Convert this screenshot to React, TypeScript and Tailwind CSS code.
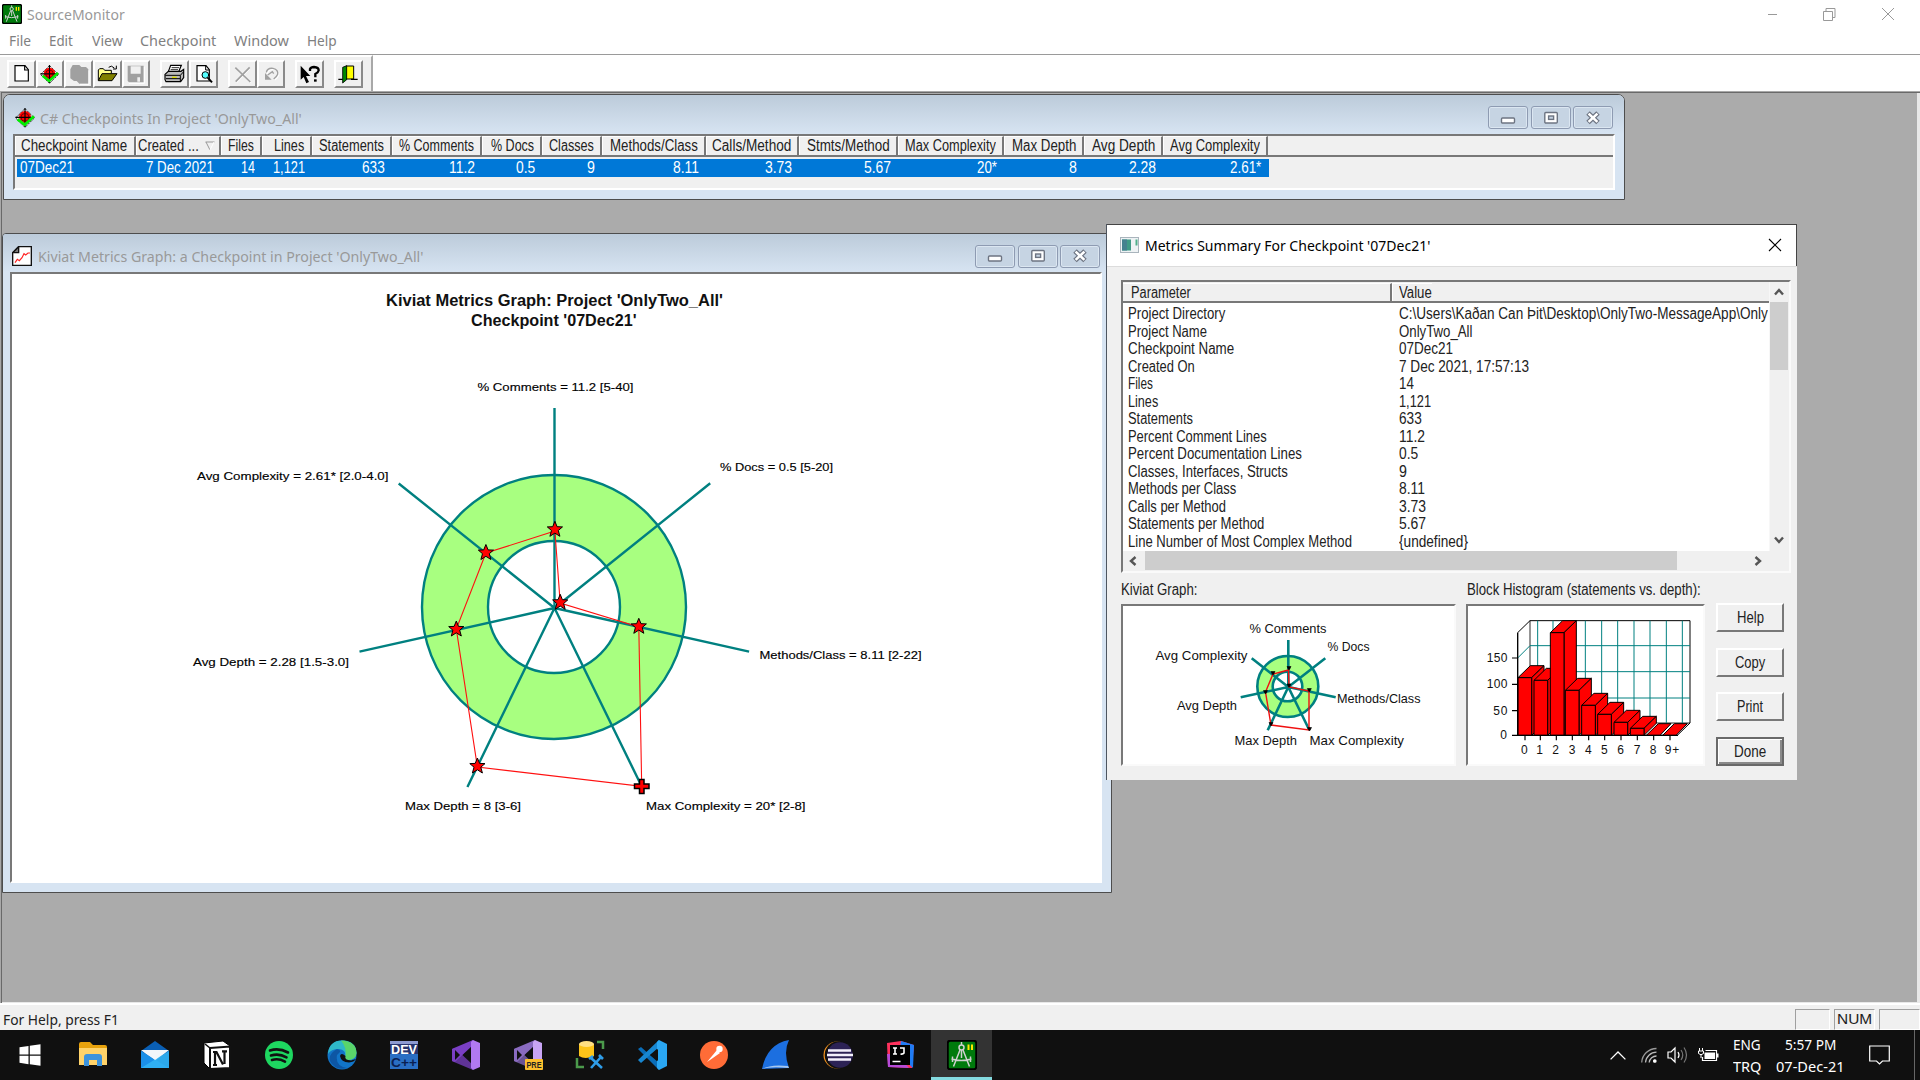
import React, { useLayoutEffect, useRef, useState } from "react";

const sans = "font-['Liberation_Sans',Arial,sans-serif]";

/* Single line of text condensed or stretched horizontally to the given width. */
function T({ w, className = "", children }: { w: number; className?: string; children: string }) {
  const ref = useRef<HTMLSpanElement>(null);
  const [scale, setScale] = useState(1);
  useLayoutEffect(() => {
    if (ref.current) setScale(w / ref.current.offsetWidth);
  }, [w, children]);
  return (
    <span className={"inline-block shrink-0 whitespace-pre text-left " + className} style={{ width: w }}>
      <span ref={ref} className="inline-block origin-left" style={{ transform: `scaleX(${scale})` }}>
        {children}
      </span>
    </span>
  );
}

function Compass({ className }: { className: string }) {
  return (
    <svg viewBox="0 0 60 60" className={className}>
      <rect x="1.5" y="1.5" width="57" height="57" rx="5" fill="#007a0c" stroke="#000" strokeWidth="4" />
      <path d="M43 9v11M50 9v11" stroke="#ffe800" strokeWidth="4" />
      <path d="M26 20L13 53M32 20L45 53M9 38q20 6 40 0M11 33v11M47 33v11" stroke="#d0d0d0" strokeWidth="3" fill="none" />
      <circle cx="29" cy="15" r="5" fill="none" stroke="#d0d0d0" strokeWidth="3" />
      <path d="M29 4v6M29 20v16" stroke="#d0d0d0" strokeWidth="3" />
    </svg>
  );
}

function Target({ className }: { className: string }) {
  return (
    <svg viewBox="0 0 60 60" className={className}>
      <path d="M30 2L58 30L30 58L2 30Z" fill="#eee" stroke="#222" strokeWidth="3" strokeDasharray="7 3" />
      <circle cx="30" cy="27" r="18" fill="#f00" />
      <path d="M30 0v58M1 28h57" stroke="#000" strokeWidth="3.5" />
      <circle cx="30" cy="28" r="12" fill="none" stroke="#300" strokeWidth="2" />
      <path d="M8 34L29 50L57 25" fill="none" stroke="#0e0" strokeWidth="8" />
    </svg>
  );
}

function ToolButton({ children, className = "" }: { children: React.ReactNode; className?: string }) {
  return (
    <div className={"flex h-[28px] w-[28.7px] items-center justify-center border-2 border-t-white border-l-white border-r-[#8a8a8a] border-b-[#8a8a8a] bg-[#f0f0f0] " + className}>
      {children}
    </div>
  );
}

function Toolbar() {
  const c = "h-[24px] w-[24px] shrink-0";
  return (
    <div className="flex h-[37px] items-start border-t border-[#9a9a9a] bg-white">
      <div className="flex h-[36px] w-[373px] items-start border-t-2 border-r-2 border-t-white border-r-[#a8a8a8] bg-[#f0f0f0] pt-[3px] pl-[7px]">
        <ToolButton>
          <svg viewBox="28 183 72 72" className={c}>
            <path d="M46 194H76L86 206V240H46Z" fill="#fff" stroke="#000" strokeWidth="3.5" />
            <path d="M75 194V207H86" fill="none" stroke="#000" strokeWidth="3.5" />
          </svg>
        </ToolButton>
        <ToolButton><Target className="mr-[2px] h-[19px] w-[19px]" /></ToolButton>
        <ToolButton>
          <svg viewBox="201 183 72 72" className={c}>
            <path d="M218 192h20l6 6h14l7 7v43h-27l-8-8h-8l-11-8v-27z" fill="#a0a0a0" />
            <path d="M267 208v42h-27" fill="none" stroke="#fff" strokeWidth="3" />
          </svg>
        </ToolButton>
        <ToolButton>
          <svg viewBox="287 183 72 72" className={c}>
            <path d="M297 238V207l4-4h11l4 5h20v9" fill="#ff8" stroke="#000" strokeWidth="3" />
            <path d="M297 239L308 218H353L338 239Z" fill="#808000" stroke="#000" strokeWidth="3" />
            <path d="M328 199q8-8 17 2M351 194v10h-10" fill="none" stroke="#000" strokeWidth="3" />
          </svg>
        </ToolButton>
        <ToolButton>
          <svg viewBox="374 183 72 72" className={c}>
            <path d="M385 194h48v50h-44l-4-4z" fill="#a0a0a0" />
            <path d="M394 196h30v22h-30zM414 229h8v13h-8z" fill="#f0f0f0" />
            <path d="M435 197v50h-46" fill="none" stroke="#fff" strokeWidth="3" />
          </svg>
        </ToolButton>
        <ToolButton className="ml-[10px]">
          <svg viewBox="491 183 72 72" className={c}>
            <path d="M507 212L514 193H546L538 212" fill="#fff" stroke="#000" strokeWidth="3.5" />
            <path d="M517 200h22M514 206h22" stroke="#000" strokeWidth="2.5" />
            <path d="M497 220L507 211H545L553 205V230L544 242H500L497 236Z" fill="#bbb" stroke="#000" strokeWidth="3.5" />
            <path d="M498 223H543L552 213M543 223V241M500 233H542" fill="none" stroke="#000" strokeWidth="3" />
            <path d="M518 229h14" stroke="#dd0" strokeWidth="4" />
          </svg>
        </ToolButton>
        <ToolButton>
          <svg viewBox="577 183 72 72" className={c}>
            <path d="M595 194H622L632 206V240H595Z" fill="#fff" stroke="#000" strokeWidth="3.5" />
            <path d="M621 194v13h11" fill="none" stroke="#000" strokeWidth="3" />
            <circle cx="620" cy="222" r="10" fill="#5ff" stroke="#000" strokeWidth="3" />
            <path d="M627 230L640 244" stroke="#000" strokeWidth="6" />
          </svg>
        </ToolButton>
        <ToolButton className="ml-[10px]">
          <svg viewBox="691 183 72 72" className={c}>
            <path d="M709 202L754 245M750 202L710 244" stroke="#fff" strokeWidth="5" />
            <path d="M707 200L752 243M750 199L708 242" stroke="#a0a0a0" strokeWidth="5" />
          </svg>
        </ToolButton>
        <ToolButton>
          <svg viewBox="778 183 72 72" className={c}>
            <path d="M800 216Q803 200 820 202Q837 206 834 220Q831 228 822 234" fill="none" stroke="#fff" strokeWidth="4" transform="translate(3 3)" />
            <path d="M800 214Q803 200 820 202Q837 206 834 220Q831 228 822 234" fill="none" stroke="#a0a0a0" strokeWidth="4" />
            <path d="M796 216V236H816Z" fill="#a0a0a0" />
            <path d="M804 222L818 212L822 218" fill="none" stroke="#a0a0a0" strokeWidth="4" />
          </svg>
        </ToolButton>
        <ToolButton className="ml-[10px]">
          <svg viewBox="895 183 72 72" className={c}>
            <path d="M903 194V236L912 228L920 247L928 243L919 225H932Z" fill="#000" />
            <path d="M931 210V204Q934 198 943 198Q957 199 957 208Q956 214 947 219V229" fill="none" stroke="#000" strokeWidth="7" />
            <path d="M943 235h8v7h-8z" />
          </svg>
        </ToolButton>
        <ToolButton className="ml-[10px]">
          <svg viewBox="1010 183 72 72" className={c}>
            <path d="M1040 195H1063V234H1040Z" fill="#ff0" stroke="#000" strokeWidth="3" />
            <path d="M1030 199L1042 194V236L1030 246Z" fill="#080" stroke="#000" strokeWidth="2.5" />
            <path d="M1017 235H1030M1055 235H1075" stroke="#000" strokeWidth="3.5" />
          </svg>
        </ToolButton>
      </div>
    </div>
  );
}

const menus: [string, number, string][] = [
  ["File", 22, "ml-[9px]"],
  ["Edit", 24, "ml-[18px]"],
  ["View", 31, "ml-[19px]"],
  ["Checkpoint", 76, "ml-[17px]"],
  ["Window", 55, "ml-[18px]"],
  ["Help", 30, "ml-[18px]"],
];

function TopBars() {
  return (
    <header className="h-[91px] bg-white font-['Noto_Sans',sans-serif] text-[15px]">
      <div className="flex h-[28px] items-center text-[#999]">
        <Compass className="ml-[2px] h-[20px] w-[20px]" />
        <T w={98} className="ml-[5px]">SourceMonitor</T>
        <svg viewBox="0 0 126 14" className="mr-[26px] ml-auto h-[14px] w-[126px]" fill="none" stroke="#999" strokeWidth="1">
          <path d="M-3 7.5h12M55.500 4.500h9v9h-9zM58 4V1.500h9v9H65M114 1l12 12M126 1L114 13" transform="translate(0 0)" />
        </svg>
      </div>
      <div className="flex h-[26px] items-center pb-[1px] text-[#808080]">
        {menus.map(([label, w, gap]) => (
          <T key={label} w={w} className={gap}>{label}</T>
        ))}
      </div>
      <Toolbar />
    </header>
  );
}

function CaptionButtons() {
  const b = "flex h-[23px] w-[40px] items-center justify-center rounded-[3px] border border-[#8e9bb2] bg-[#c6d4e3] shadow-[inset_0_0_0_1px_#dbe6f1]";
  return (
    <div className="flex gap-[2.5px]">
      <div className={b}>
        <svg viewBox="0 0 16 14" className="h-[14px] w-[16px]"><rect x="1.5" y="7" width="13" height="5" rx="1" fill="#fff" stroke="#6d7482" strokeWidth="1.4" /></svg>
      </div>
      <div className={b}>
        <svg viewBox="0 0 16 14" className="h-[14px] w-[16px]" stroke="#6d7482" strokeWidth="1.4"><rect x="1.800" y="1.500" width="12.500" height="10.500" rx="1" fill="#fff" /><rect x="5.600" y="5" width="5" height="3.400" fill="#c6d4e3" /></svg>
      </div>
      <div className={b}>
        <svg viewBox="0 0 16 14" className="h-[14px] w-[16px]"><path d="M3 2L13 11.500M13 2L3 11.500" stroke="#6d7482" strokeWidth="5" /><path d="M3.600 2.600L12.400 10.900M12.400 2.600L3.600 10.900" stroke="#fff" strokeWidth="2.600" /></svg>
      </div>
    </div>
  );
}

const columns: [string, number, number, string, number][] = [
  ["Checkpoint Name", 121, 106, "07Dec21", 54],
  ["Created ...", 85, 61, "7 Dec 2021", 68],
  ["Files", 41, 26, "14", 14],
  ["Lines", 50, 30, "1,121", 32],
  ["Statements", 80, 65, "633", 23],
  ["% Comments", 90, 75, "11.2", 26],
  ["% Docs", 60, 43, "0.5", 19],
  ["Classes", 60, 45, "9", 8],
  ["Methods/Class", 104, 88, "8.11", 26],
  ["Calls/Method", 93, 79, "3.73", 27],
  ["Stmts/Method", 99, 83, "5.67", 27],
  ["Max Complexity", 106, 91, "20*", 20],
  ["Max Depth", 80, 64, "8", 8],
  ["Avg Depth", 79, 63, "2.28", 27],
  ["Avg Complexity", 105, 90, "2.61*", 31],
];

function CheckpointsWindow() {
  return (
    <section className="absolute top-[3px] left-[3px] flex h-[106px] w-[1622px] flex-col rounded-t-[7px] border border-[#4d4d4d] bg-[#d7e4f2] shadow-[inset_0_1px_0_#eef3f8]">
      <div className="flex h-[39px] shrink-0 items-center rounded-t-[6px] bg-linear-to-b from-[#bccbda] to-[#d7e4f2] pr-[11px] pl-[11px]">
        <Target className="mt-[6px] h-[20px] w-[20px]" />
        <T w={262} className="mt-[7px] ml-[5px] font-['Noto_Sans',sans-serif] text-[15px] text-[#999]">C# Checkpoints In Project 'OnlyTwo_All'</T>
        <div className="mt-[6px] ml-auto"><CaptionButtons /></div>
      </div>
      <div className={"mr-[9px] ml-[9px] h-[56px] border-2 border-t-[#787878] border-l-[#787878] border-r-white border-b-white bg-[#f0f0f0] text-[16px] leading-[18px] text-[#222] " + sans}>
        <div className="flex h-[21px] border-b-2 border-[#787878]">
          {columns.map(([name, w, tw], i) => (
            <div key={name} className="flex shrink-0 items-center border-t border-r-2 border-l border-t-white border-r-[#787878] border-l-white" style={{ width: w }}>
              <T w={tw} className={i === 0 ? "ml-[5px]" : i === 1 ? "ml-[1px]" : "mr-[6px] ml-auto"}>{name}</T>
              {i === 1 && (
                <svg viewBox="0 0 10 10" className="ml-[6px] h-[10px] w-[10px]"><path d="M.5 1h9M1 1l4 8" fill="none" stroke="#999" /><path d="M9 1L5 9" stroke="#fff" /></svg>
              )}
            </div>
          ))}
        </div>
        <div className="mt-[2px] ml-[2px] flex h-[18px] w-[1252px] bg-[#0078d7] text-white">
          {columns.map(([name, w, , v, vw], i) => (
            <div key={name} className={"flex shrink-0 items-center " + (i === 0 ? "-ml-[2px] pl-[5px]" : "justify-end pr-[7px]")} style={{ width: w }}>
              <T w={vw}>{v}</T>
            </div>
          ))}
        </div>
      </div>
    </section>
  );
}

const star = "M0 -8L2.2 -2.6L7.6 -2.4L3.4 1.2L5 7L0 3.8L-5 7L-3.4 1.2L-7.6 -2.4L-2.2 -2.6Z";
const bigLabels: [string, number, number, number][] = [
  ["% Comments = 11.2 [5-40]", 478, 391, 156],
  ["% Docs = 0.5 [5-20]", 720.5, 471, 113],
  ["Methods/Class = 8.11 [2-22]", 760, 658.5, 162],
  ["Max Complexity = 20* [2-8]", 646.5, 810, 159.5],
  ["Max Depth = 8 [3-6]", 405.5, 810, 116],
  ["Avg Depth = 2.28 [1.5-3.0]", 193.5, 666, 156],
  ["Avg Complexity = 2.61* [2.0-4.0]", 197.5, 480, 191.5],
];

function KiviatChart() {
  return (
    <svg viewBox="12.5 274 1088 607" className="block h-[607px] w-[1088px]" fontFamily="Liberation Sans, Arial, sans-serif">
      <g fontSize="16" fontWeight="bold" fill="#111">
        <text x="386.5" y="306" textLength="337" lengthAdjust="spacingAndGlyphs">Kiviat Metrics Graph: Project 'OnlyTwo_All'</text>
        <text x="471.500" y="326" textLength="165.500" lengthAdjust="spacingAndGlyphs">Checkpoint '07Dec21'</text>
      </g>
      <g stroke="#008080" strokeWidth="2.4">
        <circle cx="554.5" cy="607" r="132" fill="#a8ff80" />
        <circle cx="554.5" cy="607" r="66" fill="#fff" />
        <path d="M555 608V408M555 608L710.7 483.3M555 608L749.6 651.7M555 608L642 786M555 608L467.9 787M555 608L360 651.7M555 608L399.2 483.5" />
      </g>
      <path d="M555.4 531L560.7 603L639.3 627L642.2 786.3L477.9 767L456.8 629L486.4 553Z" fill="none" stroke="#ff1010" strokeWidth="1.1" />
      {[[555.4, 529.3], [560.7, 602.3], [639.3, 626.3], [477.9, 766], [456.8, 629], [486.4, 552.5]].map(([x, y]) => (
        <path key={x} d={star} transform={`translate(${x} ${y})`} fill="#f00" stroke="#000" strokeWidth="1" />
      ))}
      <path d="M640 779.5h4.5v4.5h5v4.5h-5v5H640v-5h-5V784h5z" fill="#f00" stroke="#000" strokeWidth="1.5" />
      <g fontSize="11.8" fill="#000" stroke="#000" strokeWidth=".15">
        {bigLabels.map(([s, x, y, w]) => (
          <text key={s} x={x} y={y} textLength={w} lengthAdjust="spacingAndGlyphs">{s}</text>
        ))}
      </g>
    </svg>
  );
}

function KiviatWindow() {
  return (
    <section className="absolute top-[142px] left-[2px] flex h-[660px] w-[1110px] flex-col rounded-t-[4px] border border-[#4d4d4d] bg-[#d7e4f2]">
      <div className="flex h-[38px] shrink-0 items-center rounded-t-[3px] bg-linear-to-b from-[#bccbda] to-[#d7e4f2] pr-[11px] pl-[9px]">
        <svg viewBox="0 0 60 60" className="mt-[6px] h-[20px] w-[20px]">
          <path d="M20 2H58V58H2V20Z" fill="#fff" stroke="#111" strokeWidth="4" />
          <path d="M20 2V20H2Z" fill="#777" stroke="#111" strokeWidth="4" />
          <path d="M9 50l7-10 6 4 8-9 6-12 5 4 7-6h6" fill="none" stroke="#f22" strokeWidth="3.5" />
        </svg>
        <T w={385} className="mt-[7px] ml-[5.500px] font-['Noto_Sans',sans-serif] text-[15px] text-[#999]">Kiviat Metrics Graph: a Checkpoint in Project 'OnlyTwo_All'</T>
        <div className="mt-[6px] ml-auto"><CaptionButtons /></div>
      </div>
      <div className="ml-[7px] h-[611px] w-[1092px] border-2 border-t-[#787878] border-r-white border-b-white border-l-[#787878] bg-white">
        <KiviatChart />
      </div>
    </section>
  );
}

const rows: [string, number, string, number][] = [
  ["Project Directory", 97, "C:\\Users\\Kaðan Can Þit\\Desktop\\OnlyTwo-MessageApp\\Only", 369],
  ["Project Name", 79, "OnlyTwo_All", 73.5],
  ["Checkpoint Name", 106, "07Dec21", 54],
  ["Created On", 67, "7 Dec 2021, 17:57:13", 130],
  ["Files", 25, "14", 15],
  ["Lines", 30, "1,121", 32],
  ["Statements", 65, "633", 23],
  ["Percent Comment Lines", 139, "11.2", 26],
  ["Percent Documentation Lines", 174, "0.5", 19],
  ["Classes, Interfaces, Structs", 160, "9", 8],
  ["Methods per Class", 108, "8.11", 26],
  ["Calls per Method", 98, "3.73", 27],
  ["Statements per Method", 136, "5.67", 27],
  ["Line Number of Most Complex Method", 224, "{undefined}", 69],
];

function Chevron({ className }: { className: string }) {
  return (
    <svg viewBox="0 0 12 12" className={"h-[12px] w-[12px] shrink-0 " + className}>
      <path d="M2 8.5L6 4L10 8.5" fill="none" stroke="#555" strokeWidth="2.4" />
    </svg>
  );
}

const sunken = "border-2 border-t-[#787878] border-l-[#787878] border-r-[#fafafa] border-b-[#fafafa]";

function ParameterList() {
  return (
    <div className={"grid h-[293px] w-[670px] grid-cols-[1fr_19px] grid-rows-[1fr_19px] bg-[#f0f0f0] pr-[1px] pb-[1px] " + sunken}>
      <div className="overflow-hidden bg-white">
        <div className="flex h-[21px] border-b-2 border-[#787878] bg-[#f0f0f0] pt-px">
          <div className="flex w-[269px] items-center border-t border-r-2 border-t-white border-r-[#787878] pl-[8px]"><T w={60}>Parameter</T></div>
          <div className="flex items-center border-t border-l border-white pl-[6px]"><T w={33}>Value</T></div>
        </div>
        <div className="pt-[2.5px]">
          {rows.map(([name, w, v, vw]) => (
            <div key={name} className="flex h-[17.5px] items-center">
              <div className="w-[271px] shrink-0 pl-[5px]"><T w={w}>{name}</T></div>
              <div className="pl-[5px]"><T w={vw}>{v}</T></div>
            </div>
          ))}
        </div>
      </div>
      <div className="flex flex-col items-center border-l border-[#f7f7f7] pt-[4px] pb-[5px]">
        <Chevron className="" />
        <div className="mt-[4px] h-[68px] w-full bg-[#cdcdcd]" />
        <Chevron className="mt-auto rotate-180" />
      </div>
      <div className="flex items-center pr-[5px] pl-[4px]">
        <Chevron className="-rotate-90" />
        <div className="ml-[6px] h-full w-[532px] bg-[#cdcdcd]" />
        <Chevron className="ml-auto rotate-90" />
      </div>
    </div>
  );
}

const miniLabels: [string, number, number, number][] = [
  ["% Comments", 1249.5, 632.5, 77],
  ["% Docs", 1327.5, 651, 42],
  ["Methods/Class", 1337, 702.5, 83.5],
  ["Max Complexity", 1309.5, 745, 94.5],
  ["Max Depth", 1234.5, 745, 62.5],
  ["Avg Depth", 1177, 710, 60],
  ["Avg Complexity", 1155.5, 660, 92],
];

function MiniKiviat() {
  return (
    <svg viewBox="1123 606 331 158" className="block h-[158px] w-[331px]" fontFamily="Liberation Sans, Arial, sans-serif">
      <g stroke="#008080" strokeWidth="2.6">
        <circle cx="1287.8" cy="686.5" r="30.5" fill="#a8ff80" />
        <circle cx="1287.5" cy="686.5" r="14.8" fill="#fff" />
        <path d="M1288.3 687V640M1288.3 687L1325.3 658.3M1288.3 687L1335.7 697.3M1288.3 687L1309.3 730M1288.3 687L1267.7 730.3M1288.3 687L1240.7 697.3M1288.3 687L1251.7 658.3" />
      </g>
      <path d="M1288.5 670L1289 687L1309 691V730L1271 725L1265.5 692L1273 674Z" fill="none" stroke="#f01010" strokeWidth="1.4" />
      {[[1289, 668], [1289, 685.5], [1309.3, 690], [1309.5, 729], [1271, 724], [1265.5, 692], [1273, 673]].map(([x, y]) => (
        <path key={`${x} ${y}`} d="M-2 -1.500h4L.5 1.500h-1z" transform={`translate(${x} ${y})`} stroke="#000" strokeWidth=".6" />
      ))}
      <g fontSize="12.2" fill="#111">
        {miniLabels.map(([s, x, y, w]) => (
          <text key={s} x={x} y={y} textLength={w} lengthAdjust="spacingAndGlyphs">{s}</text>
        ))}
      </g>
    </svg>
  );
}

const bars: [number, number][] = [
  [234, 323], [282, 331], [331, 188], [376, 361], [425, 406], [473, 433], [522, 457], [571, 475],
];

function Histogram() {
  return (
    <svg viewBox="84 108 705 474" className="block h-[158px] w-[235px]" fontFamily="Liberation Sans, Arial, sans-serif">
      <path d="M270 152H750V459L712 496H233V188Z" fill="#fff" stroke="#000" strokeWidth="3" />
      <path d="M270 152V459H750M270 459L233 496" fill="none" stroke="#000" strokeWidth="2.5" />
      <path d="M233 264L270 227H750M270 305H750M270 384H750M293 152V459M339 152V459M436 152V459M485 152V459M533 152V459M582 152V459M630 152V459M679 152V459M727 152V459" fill="none" stroke="#008080" strokeWidth="3" />
      {bars.map(([x, y]) => (
        <g key={x} fill="#f00" stroke="#000" strokeWidth="3" strokeLinejoin="round">
          <path d={`M${x} ${y}l37 -36h41l-37 36z`} />
          <path d={`M${x + 41} ${y}l37 -36V460L${x + 41} 496z`} />
          <path d={`M${x} ${y}h41V496H${x}z`} />
        </g>
      ))}
      <path d="M619 496L655 461H693L660 496ZM668 496L703 461H742L708 496Z" fill="#f00" stroke="#000" strokeWidth="3" />
      <path d="M216 264h17M216 343h17M216 422h17M216 496H714M233 188V496M255 496v15M301 496v15M349 496v15M397 496v15M446 496v15M494 496v15M543 496v15M592 496v15M641 496v15M690 496v15" stroke="#000" strokeWidth="3.5" fill="none" />
      <g fontSize="36" fill="#111">
        <text x="140" y="276" textLength="62">150</text>
        <text x="140" y="355" textLength="62">100</text>
        <text x="160" y="434" textLength="42">50</text>
        <text x="181" y="508">0</text>
        {[243, 289, 337, 386, 435, 483, 532, 581, 629].map((x, i) => (
          <text key={x} x={x} y="551">{i}</text>
        ))}
        <text x="674" y="551" textLength="44">9+</text>
      </g>
    </svg>
  );
}

const dialogButtons: [string, number, string][] = [
  ["Help", 27, "mt-0 border-t-white border-l-white border-r-[#787878] border-b-[#787878]"],
  ["Copy", 30, "mt-[16px] border-t-white border-l-white border-r-[#787878] border-b-[#787878]"],
  ["Print", 26, "mt-[15px] border-t-white border-l-white border-r-[#787878] border-b-[#787878]"],
  ["Done", 32, "mt-[16px] border-[#696969] shadow-[inset_1px_1px_0_#fff,inset_-2px_-2px_0_#8a8a8a]"],
];

function SummaryDialog() {
  return (
    <section className={"absolute top-[133px] left-[1106px] h-[556px] w-[691px] border-l border-[#4d5560] bg-[#f0f0f0] text-[16px] leading-[18px] text-[#222] " + sans}>
      <div className="flex h-[42px] items-center border-t border-r border-[#444] bg-white pb-[2px] pl-[13px]">
        <svg viewBox="0 0 20 16" className="h-[16px] w-[20px]">
          <rect x=".5" y=".5" width="18" height="15" fill="#eef2f4" stroke="#a9b4bc" />
          <rect x="2" y="2.5" width="9" height="11" fill="#3f9a86" />
          <path d="M2 2.5h5v11H2z" fill="#44818f" />
          <rect x="15.500" y="2.500" width="2" height="6" fill="#4fae8a" />
        </svg>
        <T w={285} className="mt-[1px] ml-[5px] font-['Noto_Sans',sans-serif] text-[15px] text-black">Metrics Summary For Checkpoint '07Dec21'</T>
        <svg viewBox="0 0 14 14" className="mr-[14px] ml-auto h-[14px] w-[14px]"><path d="M1 1l12 12M13 1L1 13" stroke="#000" strokeWidth="1.1" /></svg>
      </div>
      <div className="border-t border-[#dcdcdc] pt-[13px] pl-[14px]">
        <ParameterList />
        <div className="mt-[8px] flex">
          <div className="w-[335px]">
            <T w={76}>Kiviat Graph:</T>
            <div className={"mt-[5px] h-[162px] bg-white " + sunken}><MiniKiviat /></div>
          </div>
          <div className="ml-[10px] w-[239px]">
            <T w={234} className="ml-[1px]">Block Histogram (statements vs. depth):</T>
            <div className={"mt-[5px] h-[162px] bg-white " + sunken}><Histogram /></div>
          </div>
          <div className="ml-[11px] w-[68px] pt-[22px]">
            {dialogButtons.map(([label, w, cls]) => (
              <div key={label} className={"flex h-[29px] items-center justify-center border-2 " + cls}><T w={w}>{label}</T></div>
            ))}
          </div>
        </div>
      </div>
    </section>
  );
}

function StatusBar() {
  const pane = "h-[21px] border-t border-l border-[#a0a0a0] border-r border-b border-r-white border-b-white";
  return (
    <footer className={"flex h-[27px] items-center border-t-2 border-white bg-[#f0f0f0] pt-[3px] pl-[2.500px] text-[16px] leading-[18px] text-[#222] " + sans}>
      <T w={116} className="-mt-[1px] font-['Noto_Sans',sans-serif] text-[15px]">For Help, press F1</T>
      <div className={"ml-auto w-[35px] " + pane} />
      <div className={"ml-[4px] flex w-[41px] items-center pl-[2px] " + pane}><T w={35} className="text-[15px]">NUM</T></div>
      <div className={"ml-[4px] w-[41px] " + pane} />
    </footer>
  );
}

function VsLogo({ a, b }: { a: string; b: string }) {
  return (
    <g>
      <path d="M1 9L4 8L22 25V30L3 22L1 21Z" fill={a} opacity=".75" />
      <path d="M1 21L4 22L22 5V0L3 8L1 9Z" fill={a} />
      <path d="M4 10v10l5-5z" fill="#101010" />
      <path d="M22 0L29 3V27L22 30L20 28V2Z" fill={b} />
      <path d="M20 9v12l-8-6z" fill="#101010" />
    </g>
  );
}

const apps: React.ReactNode[] = [
  <g fill="#fff"><path d="M3.500 7.300L12.500 6V14.500H3.500zM13.800 5.800L24.500 4.300V14.500H13.800zM3.500 15.700H12.500V24.200L3.500 22.800zM13.800 15.700H24.500V25.800L13.800 24.300z" /></g>,
  <g><path d="M1 4q0-2 2-2h9l3 3h12q2 0 2 2v18H1z" fill="#e8a20c" /><path d="M1 8h28v17H1z" fill="#ffd36a" /><path d="M6 26v-9q0-3 3-3h12q3 0 3 3v9h-5v-6h-8v6z" fill="#3c93dd" /></g>,
  <g><path d="M1 11L15 1L29 11V28H1z" fill="#0a5fb4" /><path d="M1 10H29L15 21z" fill="#f3f6fa" /><path d="M1 11L29 28H1z" fill="#1b8fe8" /><path d="M29 11L1 28H29z" fill="#32b5f4" opacity=".85" /><path d="M3 10H27L15 20z" fill="#f3f6fa" /></g>,
  <g><path d="M2 3L21 1L28 6V28L8 29L2 23Z" fill="#fff" stroke="#000" /><path d="M8 8L28 6.5V28L8 29Z" fill="#fff" stroke="#111" strokeWidth="2" /><path d="M3 4l5 4" stroke="#111" strokeWidth="1.6" /><path d="M13 25V12M11 12h3.500L21 24.500M22.500 24V11.500M20 11.300h5M11 25h4" stroke="#111" strokeWidth="2.200" fill="none" /></g>,
  <g><circle cx="15" cy="15" r="14" fill="#1ed760" /><path d="M6 10.500q9-3 18 2M7 15.500q8-2.500 15.500 1.800M8 20q6.500-2 13 1.600" stroke="#111" strokeWidth="2.600" fill="none" strokeLinecap="round" /></g>,
  <g><circle cx="15" cy="15" r="14.500" fill="#1174c8" /><path d="M1 14Q2 0 16 .5Q29 1 29.500 13Q29 20 21 20Q17 19 18.500 16Q19 10 12 9Q4 9 1 14Z" fill="#2fb8c8" /><path d="M14 .5Q29 1 29.500 13Q29 20 21 20Q17 19 18.500 16Q20 8 14 .5Z" fill="#5ad46a" /><path d="M18.500 16Q17 20 24 20.500L29 19Q27 22 22 22.500Q14 22 13 16Q14 12 18.500 16Z" fill="#101010" /><path d="M10 15Q8 26 20 28Q8 31 3 21Q1 14 10 9Q14 10 13 12Z" fill="#0d56a4" /></g>,
  <g><rect x="1" y="1" width="28" height="28" fill="#2a6fc4" /><rect x="1" y="1" width="28" height="13" fill="#27356e" /><path d="M1 1h28v3H1z" fill="#8d9ad0" /><text x="2" y="14" fontSize="12" fontWeight="bold" fill="#fff" textLength="26" lengthAdjust="spacingAndGlyphs">DEV</text><text x="2" y="27" fontSize="13" fontWeight="bold" fill="#0a1f52" textLength="26" lengthAdjust="spacingAndGlyphs">C++</text></g>,
  <VsLogo a="#7a3fc4" b="#b179f1" />,
  <g><VsLogo a="#8a6bc0" b="#c9a5f5" /><rect x="12" y="19" width="18" height="11" rx="1" fill="#fcbf2d" /><text x="13.500" y="28" fontSize="9" fontWeight="bold" fill="#222" textLength="15" lengthAdjust="spacingAndGlyphs">PRE</text></g>,
  <g><path d="M4 4v12q6 4 15 0V4z" fill="#fcc419" /><ellipse cx="11.500" cy="4" rx="7.500" ry="3" fill="#ffe083" /><path d="M22 2h6v7M2 18v9h7" stroke="#4b9a4b" strokeWidth="2.500" fill="none" /><path d="M16 18L27 28M26 17L16 28" stroke="#2f9de8" strokeWidth="2.600" /><path d="M14 19l4-3M24 15l4 4" stroke="#2f9de8" strokeWidth="2.600" /></g>,
  <g><path d="M1 9L4 7L22 23V30z" fill="#0a6db8" /><path d="M1 20L4 23L22 7V0z" fill="#1787d2" /><path d="M22 0L30 4V26L22 30L20 28V2z" fill="#2aa7f3" /><path d="M21 9v12l-8-6z" fill="#101010" /></g>,
  <g><circle cx="15" cy="15" r="14" fill="#ff6c37" /><path d="M8 22L18 10L21 13L11 20z" fill="#fff" /><circle cx="20.500" cy="9" r="3.200" fill="#fff" /></g>,
  <g><path d="M1 29Q6 4 28 0Q22 12 28 28Z" fill="#1c6fe0" /><path d="M1 29Q10 26 28 28L27 26Q10 24 1 29Z" fill="#a6c8f0" /></g>,
  <g><circle cx="14" cy="15" r="13.500" fill="#f7941e" /><circle cx="15.500" cy="15" r="13.800" fill="#101010" /><circle cx="17" cy="15" r="12.800" fill="#2c2255" /><path d="M5 10.500h23M4 15h26M5 19.500h23" stroke="#f2f0fa" strokeWidth="2.400" /></g>,
  <g><path d="M2 3L16 1L29 5L27 28L3 27z" fill="#fe315d" /><path d="M16 1L29 5L28 28L14 15z" fill="#1f7cf5" /><path d="M2 14L3 27L24 28L12 14z" fill="#b64bd8" /><rect x="5" y="5" width="20" height="20" fill="#000" /><path d="M8 8h4M10 8v6M8 14h4M15 8h4v5q-1 1.500-3.500 1M7.500 21.500h8" stroke="#fff" strokeWidth="1.600" fill="none" /></g>,
];

function Taskbar() {
  return (
    <nav className="flex h-[50px] items-stretch bg-[#101010] font-['Noto_Sans',sans-serif] text-[15px] text-white">
      {apps.map((icon, i) => (
        <div key={i} className="flex w-[62.1px] items-center justify-center">
          <svg viewBox="0 0 30 30" className="h-[30px] w-[30px]" fontFamily="Liberation Sans, Arial, sans-serif">{icon}</svg>
        </div>
      ))}
      <div className="flex w-[61px] items-center justify-center border-b-[3px] border-[#84dbe0] bg-[#333]">
        <Compass className="mt-[2px] h-[30px] w-[30px]" />
      </div>
      <div className="ml-auto flex items-center">
        <svg viewBox="0 0 16 9" className="h-[9px] w-[16px]"><path d="M.6 8.400L8 1L15.400 8.400" fill="none" stroke="#fff" strokeWidth="1.300" /></svg>
        <svg viewBox="0 0 16 16" className="ml-[15px] h-[16px] w-[16px]" fill="none" stroke="#bbb" strokeWidth="1.300"><path d="M.7 15.500A14.800 14.800 0 0 1 15.500 1.500" stroke="#999" /><path d="M4.500 15.500A11 11 0 0 1 15.500 5.200M8.200 15.500A7.300 7.300 0 0 1 15.500 9" /><circle cx="13.800" cy="14" r="1.200" fill="#fff" stroke="#fff" /></svg>
        <svg viewBox="0 0 21 18" className="ml-[10px] h-[18px] w-[21px]" fill="none" stroke="#fff" strokeWidth="1.200"><path d="M1 6h3l4-4v14l-4-4H1z" /><path d="M11 6q2 3 0 6" /><path d="M14 4q3.500 5 0 10M17 1.500q5 7.500 0 15" stroke="#777" /></svg>
        <svg viewBox="0 0 21 15" className="ml-[10px] h-[15px] w-[21px]"><path d="M7.500 2.500h11v10H4.500V9" fill="none" stroke="#fff" strokeWidth="1.200" /><path d="M6.500 4.500H17V11H6.500z" fill="#fff" /><path d="M19 5.500h1.500v4H19z" fill="#fff" /><path d="M1.500 0v3M4.500 0v3M.5 3h5v2.500q-2.500 2.500-5 0zM3 7v3" fill="none" stroke="#fff" strokeWidth="1" /></svg>
        <div className="ml-[14px] flex w-[29px] flex-col leading-[22.500px]"><T w={28}>ENG</T><T w={28}>TRQ</T></div>
        <div className="ml-[14px] flex w-[69px] flex-col items-center leading-[22.500px]"><T w={51}>5:57 PM</T><T w={69}>07-Dec-21</T></div>
        <svg viewBox="0 0 21 20" className="ml-[24px] h-[20px] w-[21px]"><path d="M.7 1h19.600v15H13.500L10.500 19L7.500 16H.7z" fill="none" stroke="#fff" strokeWidth="1.200" /></svg>
        <div className="mr-[5px] ml-[24px] h-[50px] w-px bg-[#666]" />
      </div>
    </nav>
  );
}

export default function App() {
  return (
    <div className="flex h-[1080px] w-[1920px] flex-col overflow-hidden bg-white">
      <TopBars />
      <main className="relative h-[912px] overflow-hidden bg-[#ababab] shadow-[inset_1px_1px_0_#a8a8a8,inset_2px_2px_0_#696969,inset_-3px_-1px_0_#e8e8e8]">
        <CheckpointsWindow />
        <KiviatWindow />
        <SummaryDialog />
      </main>
      <StatusBar />
      <Taskbar />
    </div>
  );
}
